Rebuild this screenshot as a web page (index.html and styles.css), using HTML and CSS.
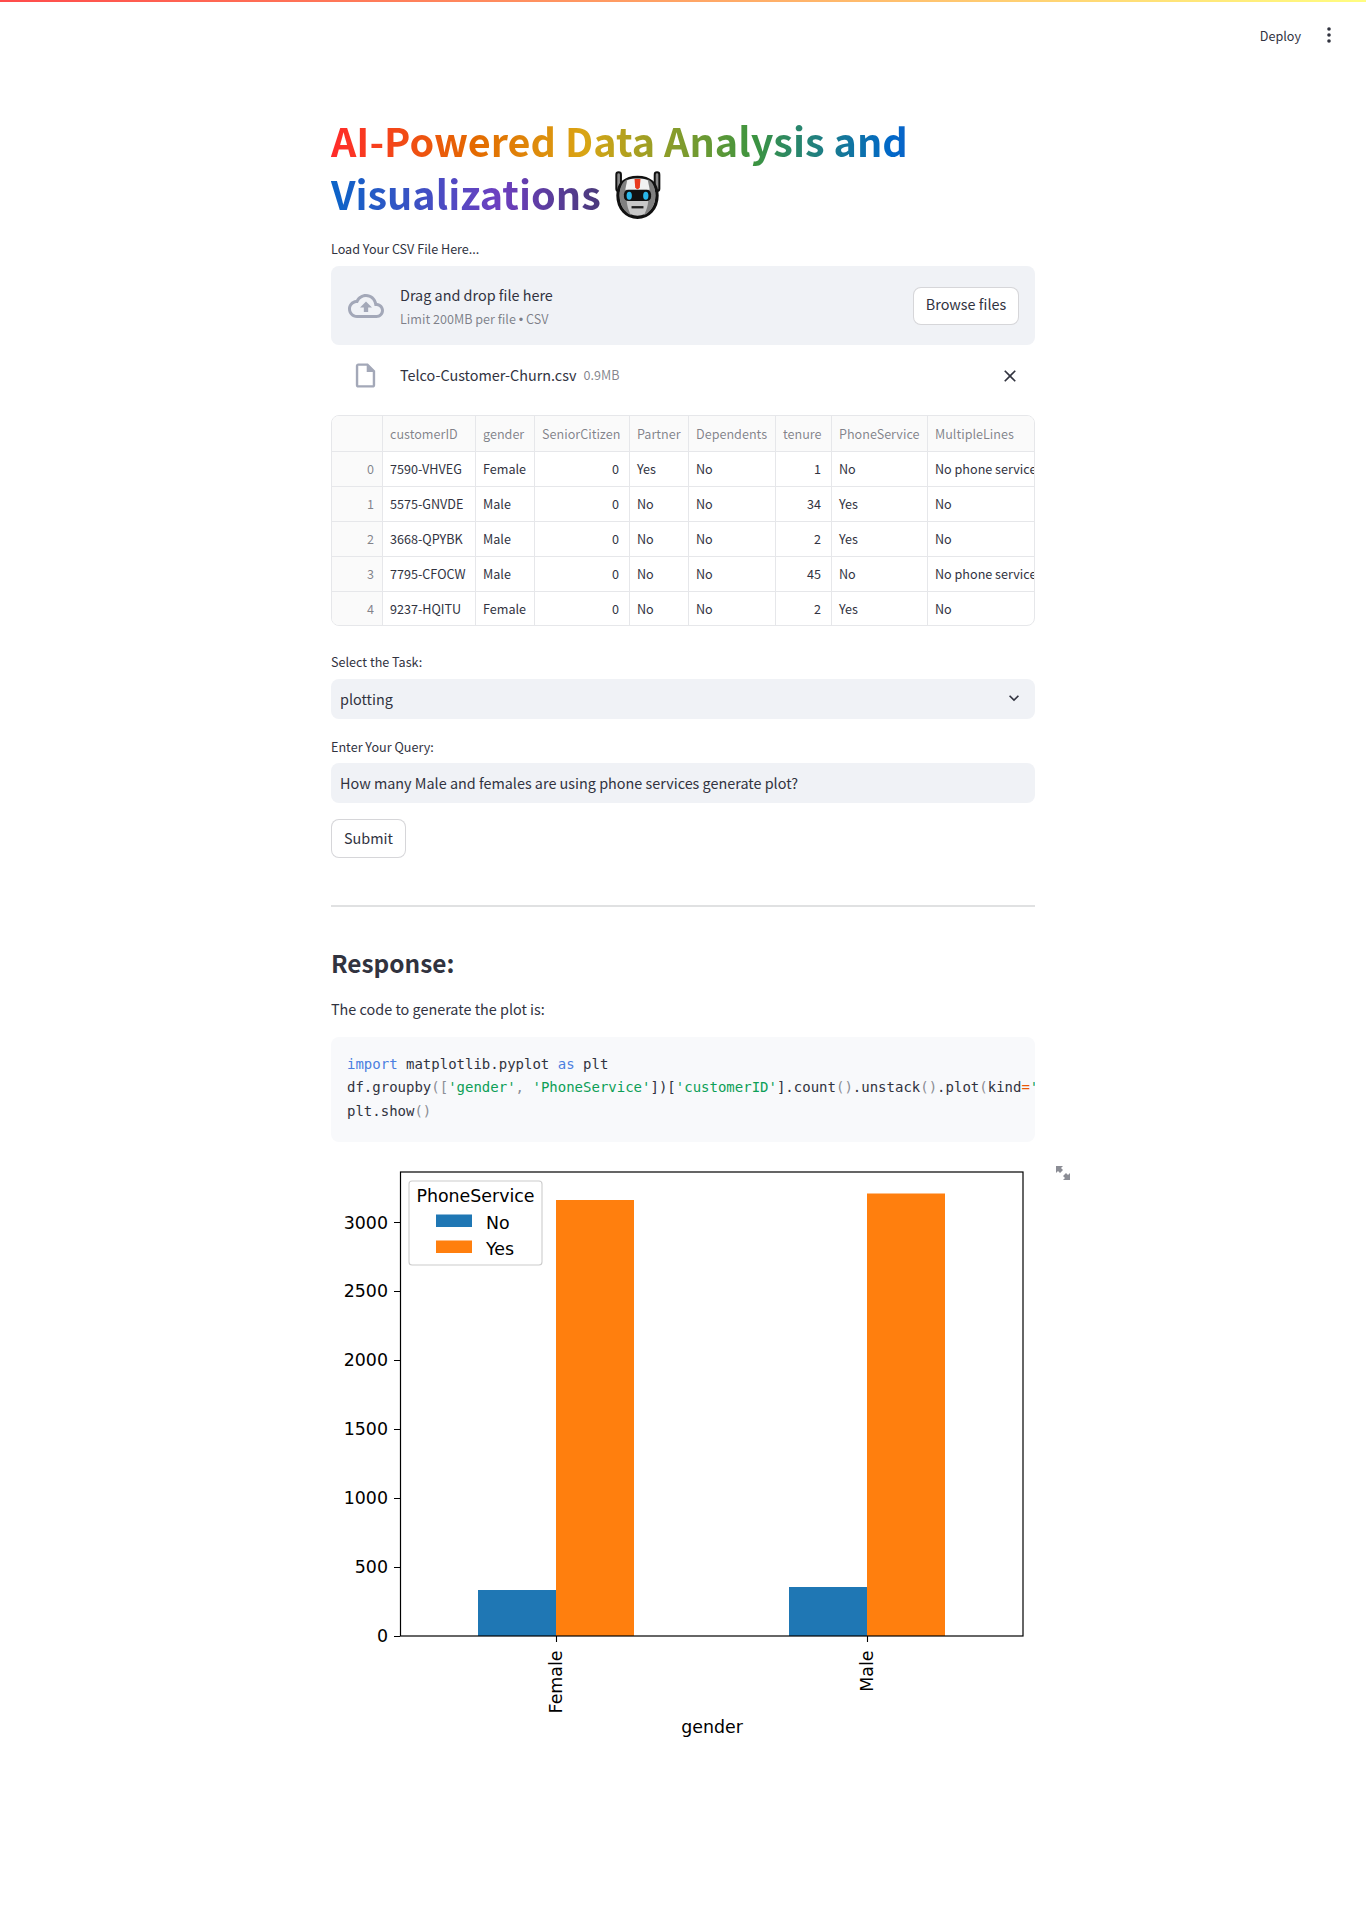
FILE: index.html
```html
<!DOCTYPE html>
<html lang="en">
<head>
<meta charset="utf-8">
<title>AI-Powered Data Analysis and Visualizations</title>
<link rel="stylesheet" href="styles.css">
</head>
<body>
<header class="topbar">
  <span class="deploy">Deploy</span>
  <svg class="kebab" viewBox="0 0 6 18" width="6" height="18"><circle cx="3" cy="3" r="1.8"/><circle cx="3" cy="9" r="1.8"/><circle cx="3" cy="15" r="1.8"/></svg>
</header>
<main class="main">
  <h1 class="title"><span class="rainbow">AI-Powered Data Analysis and Visualizations</span> <svg class="robot" viewBox="44 28 146 148" width="49" height="49">
    <path d="M60 42V85M176 42V85" stroke="#111" stroke-width="20" stroke-linecap="round"/>
    <path d="M60 42V85M176 42V85" stroke="#8c8c8c" stroke-width="8" stroke-linecap="round"/>
    <path d="M117 50C80 50 58 70 58 105C58 145 85 171 117 171C149 171 176 145 176 105C176 70 154 50 117 50Z" fill="#c9c9c9" stroke="#111" stroke-width="10"/>
    <path d="M86 56C70 64 63 82 63 105C63 135 78 155 98 165C86 145 82 120 84 90Z" fill="#808080"/>
    <path d="M148 56C164 64 171 82 171 105C171 135 156 155 136 165C148 145 152 120 150 90Z" fill="#808080"/>
    <path d="M86 58C105 52 129 52 148 58L154 88H80Z" fill="#f1f1f1"/>
    <path d="M108 55H126L124 80Q117 92 110 80Z" fill="#e8391d"/>
    <rect x="76" y="88" width="82" height="34" rx="13" fill="#111"/>
    <ellipse cx="92" cy="106" rx="8" ry="12" fill="#29b6e8"/>
    <ellipse cx="142" cy="106" rx="8" ry="12" fill="#29b6e8"/>
    <rect x="99" y="137" width="36" height="7" fill="#222"/>
  </svg></h1>

  <label class="label">Load Your CSV File Here...</label>
  <section class="uploader">
    <svg class="cloud" viewBox="0 0 24 24" width="36" height="36"><path d="M19.35 10.04C18.67 6.59 15.64 4 12 4 9.110 4 6.600 5.640 5.350 8.040 2.340 8.360 0 10.910 0 14c0 3.310 2.690 6 6 6h13c2.760 0 5-2.240 5-5 0-2.640-2.050-4.780-4.650-4.960zM19 18H6c-2.210 0-4-1.790-4-4 0-2.050 1.530-3.760 3.560-3.970l1.070-.11.5-.95C8.080 7.140 9.940 6 12 6c2.620 0 4.880 1.860 5.390 4.430l.3 1.500 1.530.11c1.560.1 2.780 1.410 2.780 2.960 0 1.650-1.350 3-3 3zM8 13h2.550v3h2.900v-3H16l-4-4z"/></svg>
    <div class="drop-text">
      <div class="drop-title">Drag and drop file here</div>
      <div class="drop-limit">Limit 200MB per file <span class="bullet">•</span> CSV</div>
    </div>
    <button class="btn browse">Browse files</button>
  </section>
  <div class="file-row">
    <svg class="file-icon" viewBox="0 0 24 24" width="29" height="29"><path d="M14 2H6c-1.100 0-1.990.9-1.990 2L4 20c0 1.100.89 2 1.990 2H18c1.100 0 2-.9 2-2V8l-6-6zM6 20V4h7v5h5v11H6z"/></svg>
    <span class="file-name">Telco-Customer-Churn.csv</span>
    <span class="file-size">0.9MB</span>
    <svg class="file-close" viewBox="0 0 24 24" width="20" height="20"><path d="M19 6.410L17.590 5 12 10.590 6.410 5 5 6.410 10.590 12 5 17.590 6.410 19 12 13.410 17.590 19 19 17.590 13.410 12z"/></svg>
  </div>

  <div class="table-wrap">
    <table class="data">
      <colgroup><col class="c0"><col class="c1"><col class="c2"><col class="c3"><col class="c4"><col class="c5"><col class="c6"><col class="c7"><col class="c8"></colgroup>
      <thead><tr><th></th><th>customerID</th><th>gender</th><th>SeniorCitizen</th><th>Partner</th><th>Dependents</th><th>tenure</th><th>PhoneService</th><th>MultipleLines</th></tr></thead>
      <tbody>
        <tr><td class="idx">0</td><td>7590-VHVEG</td><td>Female</td><td class="num">0</td><td>Yes</td><td>No</td><td class="num">1</td><td>No</td><td>No phone service</td></tr>
        <tr><td class="idx">1</td><td>5575-GNVDE</td><td>Male</td><td class="num">0</td><td>No</td><td>No</td><td class="num">34</td><td>Yes</td><td>No</td></tr>
        <tr><td class="idx">2</td><td>3668-QPYBK</td><td>Male</td><td class="num">0</td><td>No</td><td>No</td><td class="num">2</td><td>Yes</td><td>No</td></tr>
        <tr><td class="idx">3</td><td>7795-CFOCW</td><td>Male</td><td class="num">0</td><td>No</td><td>No</td><td class="num">45</td><td>No</td><td>No phone service</td></tr>
        <tr><td class="idx">4</td><td>9237-HQITU</td><td>Female</td><td class="num">0</td><td>No</td><td>No</td><td class="num">2</td><td>Yes</td><td>No</td></tr>
      </tbody>
    </table>
  </div>

  <label class="label label-task">Select the Task:</label>
  <div class="field select"><span>plotting</span>
    <svg class="chevron" viewBox="0 0 24 24" width="20" height="20"><path d="M16.590 8.590L12 13.170 7.410 8.590 6 10l6 6 6-6z"/></svg>
  </div>
  <label class="label label-query">Enter Your Query:</label>
  <div class="field query">How many Male and females are using phone services generate plot?</div>
  <button class="btn submit">Submit</button>

  <hr class="rule">

  <h3 class="response">Response:</h3>
  <p class="intro">The code to generate the plot is:</p>
  <pre class="code"><code><span class="kw">import</span> matplotlib.pyplot <span class="kw">as</span> plt
df.groupby<span class="pn">([</span><span class="st">'gender'</span><span class="pn">,</span> <span class="st">'PhoneService'</span>])[<span class="st">'customerID'</span>].count<span class="pn">()</span>.unstack<span class="pn">()</span>.plot<span class="pn">(</span>kind<span class="op">=</span><span class="st">'bar'</span><span class="pn">)</span>
plt.show<span class="pn">()</span></code></pre>

  <div class="plot">
    <svg class="chart" viewBox="0 0 704 590" width="704" height="590">
      <g class="bars-no">
        <rect x="147" y="431" width="78" height="46"/>
        <rect x="458" y="428" width="78" height="49"/>
      </g>
      <g class="bars-yes">
        <rect x="225" y="41" width="78" height="436"/>
        <rect x="536" y="34.500" width="78" height="442.500"/>
      </g>
      <rect class="axes" x="69.500" y="13" width="622.500" height="464"/>
      <g class="ticks">
        <path d="M63 477.500H69M63 408.500H69M63 339.500H69M63 270.500H69M63 201.500H69M63 132.500H69M63 63.500H69M225.500 477V483M536.500 477V483"/>
      </g>
      <g class="tick-y">
        <text x="57" y="483">0</text>
        <text x="57" y="414">500</text>
        <text x="57" y="345">1000</text>
        <text x="57" y="276">1500</text>
        <text x="57" y="207">2000</text>
        <text x="57" y="138">2500</text>
        <text x="57" y="70">3000</text>
      </g>
      <text class="tick-x" transform="translate(231 491.500) rotate(-90)">Female</text>
      <text class="tick-x" transform="translate(542 491.500) rotate(-90)">Male</text>
      <text class="axis-label" x="381" y="574">gender</text>
      <rect class="legend" x="78" y="22" width="133" height="84" rx="3"/>
      <text class="legend-title" x="144.500" y="43">PhoneService</text>
      <rect class="swatch-no" x="105" y="55.500" width="36" height="12.500"/>
      <text class="legend-text" x="155" y="69.500">No</text>
      <rect class="swatch-yes" x="105" y="81.500" width="36" height="12.500"/>
      <text class="legend-text" x="155" y="95.500">Yes</text>
    </svg>
    <svg class="expand" viewBox="0 0 16 16" width="16" height="16"><path d="M1 1H8L6 3 8 5 5 8 3 6 1 8ZM15 15H8L10 13 8 11 11 8 13 10 15 8Z"/></svg>
  </div>
</main>
</body>
</html>
```
FILE: styles.css
```css
* { box-sizing: border-box; }
html, body { margin: 0; padding: 0; background: #fff; }
body {
  font-family: "Noto Sans CJK SC", "Noto Sans", sans-serif;
  color: #31333f;
  font-size: 14.4px;
}
.topbar {
  height: 60px;
  background: linear-gradient(90deg, #ff4b4b, #fffd80) top / 100% 2px no-repeat;
  display: flex;
  justify-content: flex-end;
  align-items: center;
  padding: 10px 34px 0 0;
  gap: 25px;
}
.deploy { font-size: 12.6px; }
.kebab { fill: #31333f; }
.main { width: 704px; margin: 0 auto; display: flex; flex-direction: column; }
.title {
  height: 106px;
  margin: 53px 0 19px;
  font-size: 39.6px;
  font-weight: 700;
  line-height: 53px;
}
.rainbow {
  background-image: linear-gradient(to right, #ff2b2b 0%, #e46a00 17%, #d9a514 30%, #3c9440 50%, #0068c9 66%, #6d3fc0 88%, #4a3a7a 100%);
  -webkit-background-clip: text;
  background-clip: text;
  color: transparent;
}
.robot { vertical-align: -9px; margin-left: 3px; }
.label { display: block; height: 28px; line-height: 22px; font-size: 12.6px; }
.uploader {
  height: 79px;
  background: #f0f2f6;
  border-radius: 8px;
  display: flex;
  align-items: center;
  padding: 0 16px 0 17px;
}
.cloud { fill: #a3a8b8; flex: none; margin-right: 16px; }
.drop-text { flex: 1; padding-top: 3px; }
.drop-title { font-size: 14.4px; line-height: 24px; }
.drop-limit { font-size: 12.6px; line-height: 24px; color: rgba(49, 51, 63, .6); }
.bullet { font-family: "Liberation Sans", sans-serif; }
.btn {
  font: inherit;
  color: #31333f;
  background: #fff;
  border: 1px solid rgba(49, 51, 63, .2);
  border-radius: 8px;
  font-size: 14.4px;
  cursor: pointer;
}
.browse { width: 106px; height: 38px; padding: 0 0 4px; }
.file-row {
  height: 40px;
  margin-top: 10px;
  display: flex;
  align-items: center;
  padding-left: 20px;
}
.file-icon { fill: #a3a8b8; flex: none; margin-right: 20px; }
.file-name { font-size: 14.4px; margin-top: -2px; }
.file-size { font-size: 12.6px; color: rgba(49, 51, 63, .6); margin-left: 7px; margin-top: -2px; }
.file-close { fill: #31333f; margin-left: auto; margin-right: 15px; margin-top: 2px; }
.table-wrap {
  margin-top: 20px;
  height: 211px;
  border: 1px solid #e6e7ea;
  border-radius: 8px;
  overflow: hidden;
}
.data { border-collapse: collapse; table-layout: fixed; width: 704px; font-size: 12.6px; margin: -1px 0 0 -1px; }
.c0 { width: 51px; } .c1 { width: 93px; } .c2 { width: 59px; } .c3 { width: 95px; } .c4 { width: 59px; }
.c5 { width: 87px; } .c6 { width: 56px; } .c7 { width: 96px; } .c8 { width: 108px; }
.data th, .data td {
  height: 35px;
  padding: 0 8px 0 7px;
  border: 1px solid #e6e7ea;
  white-space: nowrap;
  overflow: hidden;
  font-weight: 400;
  text-align: left;
}
.data td { padding-bottom: 2px; }
.data th { height: 36px; background: #fafafa; color: rgba(49, 51, 63, .6); }
.data .num { text-align: right; padding-right: 10px; }
.data .idx { text-align: right; background: #fafafa; color: rgba(49, 51, 63, .6); }
.label-task { margin-top: 25px; }
.label-query { margin-top: 16px; padding-top: 1px; }
.field {
  height: 40px;
  background: #f0f2f6;
  border-radius: 8px;
  padding: 0 9px 2px;
  display: flex;
  align-items: center;
  font-size: 14.4px;
}
.select { justify-content: space-between; padding-right: 11px; }
.chevron { fill: #31333f; }
.submit { align-self: flex-start; width: 75px; height: 39px; margin-top: 16px; padding: 0 0 2px; }
.rule { width: 100%; margin: 47px 0 0; border: 0; border-top: 2px solid rgba(49, 51, 63, .15); }
.response { margin: 36px 0 13px; font-size: 24.4px; font-weight: 600; line-height: 40px; }
.intro { margin: 0 0 16px; font-size: 14.4px; line-height: 25px; }
.code {
  margin: 0;
  height: 105px;
  padding: 16px 16px;
  background: #f8f9fb;
  border-radius: 8px;
  overflow: hidden;
  font-family: "Liberation Mono", monospace;
  font-size: 14px;
  line-height: 22.4px;
  color: #31333f;
}
.kw { color: #4b7fe0; }
.st { color: #0d9f57; }
.pn { color: #8b8d95; }
.op { color: #e8590c; }
.plot { position: relative; margin-top: 17px; height: 590px; }
.chart { display: block; font-family: "DejaVu Sans", sans-serif; font-size: 17.4px; fill: #000; }
.bars-no rect, .swatch-no { fill: #1f77b4; }
.bars-yes rect, .swatch-yes { fill: #ff7f0e; }
.axes { fill: none; stroke: #000; stroke-width: 1.2; }
.ticks { fill: none; stroke: #000; stroke-width: 1.1; }
.tick-y text { text-anchor: end; }
.tick-x { text-anchor: end; }
.axis-label { text-anchor: middle; }
.legend { fill: #fff; fill-opacity: .8; stroke: #ccc; stroke-width: 1.1; }
.legend-title { text-anchor: middle; }
.expand { position: absolute; left: 724px; top: 6px; fill: #8b8d95; }
```
